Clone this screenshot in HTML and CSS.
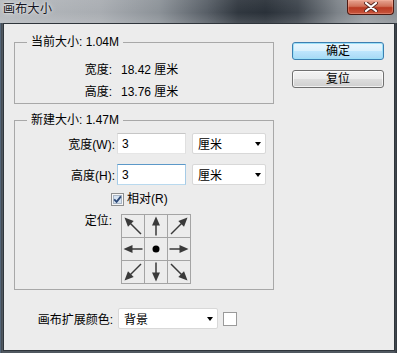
FILE: index.html
```html
<!DOCTYPE html>
<html lang="zh-CN">
<head>
    <meta charset="UTF-8">
    <title>画布大小</title>
    <link rel="stylesheet" href="styles.css">
</head>
<body>
    <!-- 箭头图形 -->
    <svg class="defs" width="0" height="0">
        <symbol id="arrow-up" viewBox="0 0 22 22">
            <polygon points="11,1.5 7,10.5 15,10.5" fill="#3a3a3a"/>
            <rect x="10.25" y="10" width="1.5" height="10.5" fill="#3a3a3a"/>
        </symbol>
        <symbol id="arrow-ne" viewBox="0 0 22 22">
            <polygon points="19.5,2.5 10.3,6 16,11.7" fill="#3a3a3a"/>
            <line x1="3" y1="19" x2="14" y2="8" stroke="#3a3a3a" stroke-width="1.5"/>
        </symbol>
    </svg>

    <div class="window">
        <div class="titlebar">
            <span class="title">画布大小</span>
            <span class="close">
                <svg width="14" height="10" viewBox="0 0 14 10">
                    <path d="M2 1 L12 9 M12 1 L2 9" stroke="#5a2a22" stroke-width="4" stroke-linecap="round"/>
                    <path d="M2 1 L12 9 M12 1 L2 9" stroke="#ffffff" stroke-width="2.2" stroke-linecap="round"/>
                </svg>
            </span>
        </div>

        <div class="client">
            <div class="main">
                <fieldset class="group group-current">
                    <legend>当前大小: 1.04M</legend>
                    <div class="info-row">
                        <span class="info-label">宽度:</span>
                        <span class="info-value">18.42 厘米</span>
                    </div>
                    <div class="info-row">
                        <span class="info-label">高度:</span>
                        <span class="info-value">13.76 厘米</span>
                    </div>
                </fieldset>

                <fieldset class="group group-new">
                    <legend>新建大小: 1.47M</legend>
                    <div class="field-row">
                        <label class="field-label">宽度(W):</label>
                        <input class="num" type="text" value="3">
                        <div class="select unit"><span>厘米</span><span class="caret"></span></div>
                    </div>
                    <div class="field-row second">
                        <label class="field-label">高度(H):</label>
                        <input class="num focused" type="text" value="3">
                        <div class="select unit"><span>厘米</span><span class="caret"></span></div>
                    </div>
                    <div class="check-row">
                        <svg class="checkbox" width="13" height="13" viewBox="0 0 13 13">
                            <rect x="0.5" y="0.5" width="12" height="12" fill="#f6f6f6" stroke="#8e8f8f"/>
                            <rect x="2.5" y="2.5" width="8" height="8" fill="#d6e3f1" stroke="#a9b6c6"/>
                            <path d="M3.2 6.4 L5.6 8.9 L9.9 3.4" fill="none" stroke="#2d4a78" stroke-width="1.8"/>
                        </svg>
                        <span>相对(R)</span>
                    </div>
                    <div class="anchor-row">
                        <span class="anchor-label">定位:</span>
                        <div class="anchor-grid">
                            <div class="cell"><svg class="r270" width="22" height="22"><use href="#arrow-ne"/></svg></div>
                            <div class="cell"><svg width="22" height="22"><use href="#arrow-up"/></svg></div>
                            <div class="cell"><svg width="22" height="22"><use href="#arrow-ne"/></svg></div>
                            <div class="cell"><svg class="r270" width="22" height="22"><use href="#arrow-up"/></svg></div>
                            <div class="cell"><svg width="22" height="22"><circle cx="11" cy="11" r="3.5" fill="#000"/></svg></div>
                            <div class="cell"><svg class="r90" width="22" height="22"><use href="#arrow-up"/></svg></div>
                            <div class="cell"><svg class="r180" width="22" height="22"><use href="#arrow-ne"/></svg></div>
                            <div class="cell"><svg class="r180" width="22" height="22"><use href="#arrow-up"/></svg></div>
                            <div class="cell"><svg class="r90" width="22" height="22"><use href="#arrow-ne"/></svg></div>
                        </div>
                    </div>
                </fieldset>

                <div class="ext-row">
                    <label class="ext-label">画布扩展颜色:</label>
                    <div class="select wide"><span>背景</span><span class="caret"></span></div>
                    <span class="swatch"></span>
                </div>
            </div>

            <div class="buttons">
                <button class="btn btn-default">确定</button>
                <button class="btn">复位</button>
            </div>
        </div>
    </div>
</body>
</html>
```

FILE: styles.css
```css
* {
    margin: 0;
    padding: 0;
    box-sizing: border-box;
}

body {
    width: 397px;
    height: 353px;
    overflow: hidden;
    font-family: "Liberation Sans", "Noto Sans CJK SC", sans-serif;
    font-size: 12px;
    color: #000;
    background: #4a525a;
}

.defs {
    position: absolute;
    width: 0;
    height: 0;
}

.window {
    width: 397px;
    height: 353px;
    display: flex;
    flex-direction: column;
    background: linear-gradient(to right, #6d88a8 0, #3a424a 1px, #505860 2px, #505860 394px, #2f353b 100%);
}

/* 标题栏 */
.titlebar {
    height: 23px;
    display: flex;
    align-items: flex-start;
    background:
        linear-gradient(to bottom, rgba(255,255,255,0.06), rgba(255,255,255,0) 55%, rgba(255,255,255,0.12)),
        linear-gradient(to right, #b6babe 0%, #a9adb2 25%, #8c9298 40%, #585f67 52%, #30373f 60%, #2a3139 67%, #3d444c 75%, #7c8288 85%, #979ca1 92%, #8a8f94 100%);
}

.title {
    margin: 2px 0 0 3px;
    line-height: 14px;
    color: #141420;
    letter-spacing: 0.3px;
    text-shadow: 0 0 5px rgba(255,255,255,0.9), 0 0 2px rgba(255,255,255,0.6);
}

.close {
    margin-left: auto;
    margin-right: 3px;
    width: 47px;
    height: 15px;
    border: 1px solid #4e1a12;
    border-top: none;
    border-radius: 0 0 4px 4px;
    background: linear-gradient(#e7a592, #d07058 45%, #ba3a22 55%, #c8563e);
    box-shadow: inset 0 0 0 1px rgba(255,190,170,0.35);
    display: flex;
    align-items: center;
    justify-content: center;
}

/* 客户区 */
.client {
    flex: 1;
    margin: 0 2px 2px 3px;
    border: 1px solid #2f353b;
    background: #ececec;
    display: flex;
}

.main {
    width: 270px;
    padding: 10px 0 0 10px;
}

.group {
    width: 260px;
    border: 1px solid #a8a8a8;
    min-width: 0;
}

.group legend {
    margin-left: 12px;
    padding: 0 4px;
    line-height: 16px;
}

.group-current {
    padding: 7px 0 2px;
}

.info-row {
    display: flex;
    align-items: center;
    height: 22px;
}

.info-label {
    width: 97px;
    text-align: right;
}

.info-value {
    margin-left: 9px;
}

.group-new {
    margin-top: 8px;
    padding: 5px 0 5px;
}

.field-row {
    display: flex;
    align-items: center;
    height: 21px;
}

.field-row.second {
    margin-top: 10px;
}

.field-label {
    width: 100px;
    margin-right: 2px;
    text-align: right;
}

.num {
    width: 69px;
    height: 21px;
    padding: 0 4px;
    font: inherit;
    color: #000;
    background: #fff;
    border: 1px solid;
    border-color: #c6c6c6 #e0e0e0 #e6e6e6 #e0e0e0;
    outline: none;
}

.num.focused {
    border-color: #5b98c8 #a6cbe6 #b9d9ee #a6cbe6;
}

.select {
    height: 21px;
    padding: 0 4px 0 5px;
    display: flex;
    align-items: center;
    justify-content: space-between;
    background: #fff;
    border: 1px solid #d8d8d8;
    border-radius: 2px;
}

.select.unit {
    width: 74px;
    margin-left: 6px;
}

.caret {
    width: 0;
    height: 0;
    border-left: 3.5px solid transparent;
    border-right: 3.5px solid transparent;
    border-top: 4px solid #000;
}

.check-row {
    margin-top: 8px;
    padding-left: 96px;
    height: 13px;
    display: flex;
    align-items: center;
    gap: 3px;
}

.check-row span {
    line-height: 13px;
}

.anchor-row {
    margin-top: 8px;
    display: flex;
    align-items: flex-start;
}

.anchor-label {
    width: 97px;
    text-align: right;
    line-height: 14px;
}

.anchor-grid {
    margin-left: 9px;
    display: grid;
    grid-template-columns: repeat(3, 22px);
    grid-auto-rows: 22px;
    gap: 1px;
    padding: 1px;
    background: #a4a4a4;
}

.cell {
    background: #ececec;
}

.cell svg {
    display: block;
}

.r90 { transform: rotate(90deg); }
.r180 { transform: rotate(180deg); }
.r270 { transform: rotate(270deg); }

.ext-row {
    margin-top: 18px;
    display: flex;
    align-items: center;
    height: 21px;
}

.ext-label {
    width: 99px;
    margin-right: 5px;
    text-align: right;
}

.select.wide {
    width: 100px;
}

.swatch {
    width: 14px;
    height: 14px;
    margin-left: 5px;
    background: #fff;
    border: 1px solid #9a9a9a;
}

/* 按钮 */
.buttons {
    margin-left: 18px;
    padding-top: 18px;
    display: flex;
    flex-direction: column;
    gap: 10px;
}

.btn {
    width: 92px;
    height: 18px;
    font: inherit;
    line-height: 16px;
    color: #000;
    border: 1px solid #707070;
    border-radius: 3px;
    background: linear-gradient(#f3f3f3 0%, #ebebeb 50%, #dddddd 51%, #cfcfcf 100%);
    box-shadow: inset 0 0 0 1px rgba(255,255,255,0.7);
}

.btn-default {
    border-color: #3c7fb1;
    background: linear-gradient(#eaf6fd 0%, #d9f0fc 50%, #bee6fd 51%, #a7d9f5 100%);
    box-shadow: inset 0 0 0 1px #9ce0f8;
}
```
